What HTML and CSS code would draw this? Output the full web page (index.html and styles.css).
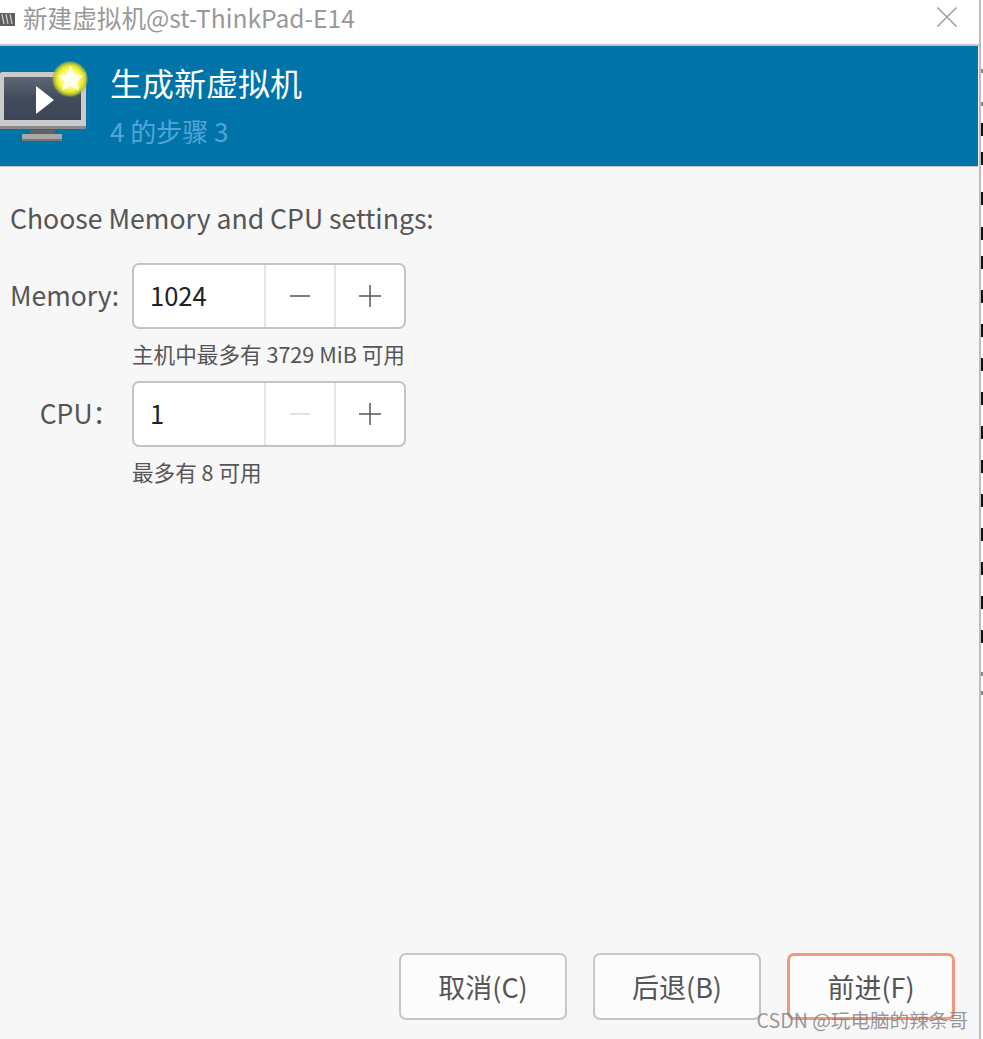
FILE: index.html
```html
<!DOCTYPE html>
<html lang="zh-CN">
<head>
  <meta charset="UTF-8">
  <meta name="viewport" content="width=device-width, initial-scale=1.0">
  <title>新建虚拟机</title>
  <link rel="stylesheet" href="styles.css">
</head>
<body>
  <div class="window">
    <div class="titlebar">
      <svg class="app-icon" width="18" height="16" viewBox="0 0 18 16">
        <path d="M0 2h15v13H0z" fill="#5e5e5e"/>
        <path d="M2 3l2 10M6 3l2 10M10 3l2 10" stroke="#c8c8c8" stroke-width="1.300"/>
      </svg>
      <span class="window-title">新建虚拟机@st-ThinkPad-E14</span>
      <svg class="close-icon" width="22" height="22" viewBox="0 0 22 22">
        <path d="M1.500 1.500l19 19M20.500 1.500l-19 19" stroke="#a0a0a0" stroke-width="1.600" fill="none"/>
      </svg>
    </div>

    <div class="banner">
      <svg class="banner-icon" width="88" height="84" viewBox="0 0 88 84">
        <defs>
          <linearGradient id="screen" x1="0" y1="0" x2="0" y2="1">
            <stop offset="0" stop-color="#5d6775"/>
            <stop offset="0.5" stop-color="#414b5b"/>
            <stop offset="1" stop-color="#3b4556"/>
          </linearGradient>
          <radialGradient id="glow">
            <stop offset="0.5" stop-color="#fbfb70"/>
            <stop offset="0.72" stop-color="#e6e82a"/>
            <stop offset="0.88" stop-color="#b4c430" stop-opacity="0.8"/>
            <stop offset="1" stop-color="#7fa850" stop-opacity="0"/>
          </radialGradient>
        </defs>
        <path d="M30 70h25v6H30z" fill="#5f6266"/>
        <path d="M22 74h40v7H22z" fill="#a8a8a8"/>
        <path d="M22 79h40v2H22z" fill="#777"/>
        <rect x="0" y="12" width="86" height="57" rx="2" fill="#cbcbcb"/>
        <path d="M0 66h86v3H0z" fill="#8a8a8a"/>
        <rect x="4" y="17" width="77" height="43" fill="url(#screen)"/>
        <path d="M36 26l18 14-18 14z" fill="#fff"/>
        <circle cx="70" cy="19" r="18.500" fill="url(#glow)"/>
        <path d="M70.500 6l4 8.500 9 1-6.500 6 2 9-8.500-4.500-8.500 4.500 2-9-6.500-6 9-1z" fill="#fffef0"/>
      </svg>
      <div class="banner-text">
        <div class="banner-title">生成新虚拟机</div>
        <div class="banner-step">4 的步骤 3</div>
      </div>
    </div>

    <div class="content">
      <div class="heading">Choose Memory and CPU settings:</div>
      <div class="form">
        <label class="field-label">Memory:</label>
        <div class="spin">
          <span class="spin-value">1024</span>
          <span class="spin-btn">
            <svg width="20" height="22" viewBox="0 0 20 22"><path d="M0 11h20" stroke="#555" stroke-width="1.500"/></svg>
          </span>
          <span class="spin-btn">
            <svg width="22" height="22" viewBox="0 0 22 22"><path d="M0 11h22M11 0v22" stroke="#555" stroke-width="1.500"/></svg>
          </span>
        </div>
        <div class="hint">主机中最多有 3729 MiB 可用</div>

        <label class="field-label">CPU：</label>
        <div class="spin">
          <span class="spin-value">1</span>
          <span class="spin-btn">
            <svg width="20" height="22" viewBox="0 0 20 22"><path d="M0 11h20" stroke="#d8d8d8" stroke-width="1.500"/></svg>
          </span>
          <span class="spin-btn">
            <svg width="22" height="22" viewBox="0 0 22 22"><path d="M0 11h22M11 0v22" stroke="#555" stroke-width="1.500"/></svg>
          </span>
        </div>
        <div class="hint">最多有 8 可用</div>
      </div>
    </div>

    <div class="footer">
      <button class="btn">取消(C)</button>
      <button class="btn">后退(B)</button>
      <button class="btn btn-focus">前进(F)</button>
    </div>
  </div>

  <!-- 后面窗口露出来的一点点 -->
  <div class="behind">
    <i class="mark mark-grey"></i>
    <i class="mark mark-grey mark-grey-last"></i>
    <i class="mark mark-step29"></i>
    <i class="mark mark-step40"></i>
    <i class="mark mark-step35"></i>
    <i class="mark mark-step29"></i>
    <i class="mark"></i>
    <i class="mark"></i>
    <i class="mark"></i>
    <i class="mark"></i>
    <i class="mark"></i>
    <i class="mark"></i>
    <i class="mark"></i>
    <i class="mark"></i>
    <i class="mark"></i>
    <i class="mark"></i>
    <i class="mark"></i>
    <i class="mark mark-last"></i>
    <i class="mark mark-grey mark-tail"></i>
    <i class="mark mark-grey mark-tail"></i>
  </div>

  <div class="watermark">CSDN @玩电脑的辣条哥</div>
</body>
</html>
```

FILE: styles.css
```css
* { box-sizing: border-box; }

html, body {
  margin: 0;
  height: 1039px;
  overflow: hidden;
}

body {
  display: flex;
  position: relative;
  background: #fff;
  font-family: "Noto Sans CJK SC", "Noto Sans", sans-serif;
  color: #555;
}

.window {
  width: 981px;
  height: 1039px;
  display: flex;
  flex-direction: column;
  background: #f7f7f7;
  border-right: 2px solid #bdbdbd;
}

.titlebar {
  height: 46px;
  flex: none;
  display: flex;
  align-items: center;
  background: #fff;
  border-bottom: 2px solid #c4c4c4;
  padding-bottom: 10px;
}

.app-icon {
  margin-right: 5px;
  margin-top: 4px;
}

.window-title {
  font-size: 24.600px;
  color: #999;
  white-space: nowrap;
}

.close-icon {
  margin-left: auto;
  margin-right: 21px;
}

.banner {
  height: 121px;
  flex: none;
  display: flex;
  width: 978px;
  background: #0073a9;
  border-bottom: 1px solid #c4c4c4;
}

.banner-icon {
  flex: none;
  margin-top: 14px;
}

.banner-text {
  margin-left: 22px;
  padding-top: 13px;
}

.banner-title {
  font-size: 32px;
  line-height: 46px;
  color: #fff;
}

.banner-step {
  font-size: 26px;
  line-height: 38px;
  margin-top: 7px;
  color: #50a5d6;
}

.content {
  flex: 1;
  padding: 32px 0 0 10px;
}

.heading {
  font-size: 26.600px;
  line-height: 38px;
  color: #555;
}

.form {
  display: grid;
  grid-template-columns: 109px 274px;
  column-gap: 13px;
  margin-top: 26px;
  align-items: center;
}

.field-label {
  font-size: 26.500px;
  line-height: 64px;
  height: 66px;
  text-align: right;
  white-space: nowrap;
  color: #555;
}

.spin {
  height: 66px;
  display: flex;
  background: #fff;
  border: 2px solid #c4c4c4;
  border-radius: 7px;
}

.spin-value {
  width: 130px;
  padding-left: 16px;
  font-size: 25.500px;
  line-height: 60px;
  color: #222;
}

.spin-btn {
  flex: 1;
  display: flex;
  align-items: center;
  justify-content: center;
  border-left: 2px solid #e6e6e6;
}

.hint {
  grid-column: 2;
  font-size: 21.600px;
  line-height: 32px;
  height: 52px;
  padding-top: 9px;
  white-space: nowrap;
  color: #555;
}

.footer {
  flex: none;
  display: flex;
  justify-content: flex-end;
  gap: 26px;
  padding: 0 24px 19px 0;
}

.btn {
  width: 168px;
  height: 67px;
  padding: 0;
  font-family: inherit;
  font-size: 27px;
  color: #555;
  background: #fcfcfc;
  border: 2px solid #c6c6c6;
  border-radius: 7px;
}

.btn-focus {
  border: 3px solid #ee9a80;
}

.behind {
  width: 2px;
  flex: none;
  display: flex;
  flex-direction: column;
  padding-top: 69px;
}

.mark {
  display: block;
  width: 2px;
  height: 13px;
  flex: none;
  margin-bottom: 21px;
  background: #111;
}

.mark-grey {
  height: 4px;
  margin-bottom: 29px;
  background: #888;
}

.mark-grey-last { margin-bottom: 17px; }
.mark-step29 { margin-bottom: 16px; }
.mark-step40 { margin-bottom: 27px; }
.mark-step35 { margin-bottom: 22px; }
.mark-last { margin-bottom: 29px; }
.mark-tail { margin-bottom: 15px; }

.watermark {
  position: absolute;
  right: 15px;
  top: 1006px;
  font-size: 19.600px;
  line-height: 28px;
  white-space: nowrap;
  color: rgba(120, 120, 120, 0.75);
}
```
